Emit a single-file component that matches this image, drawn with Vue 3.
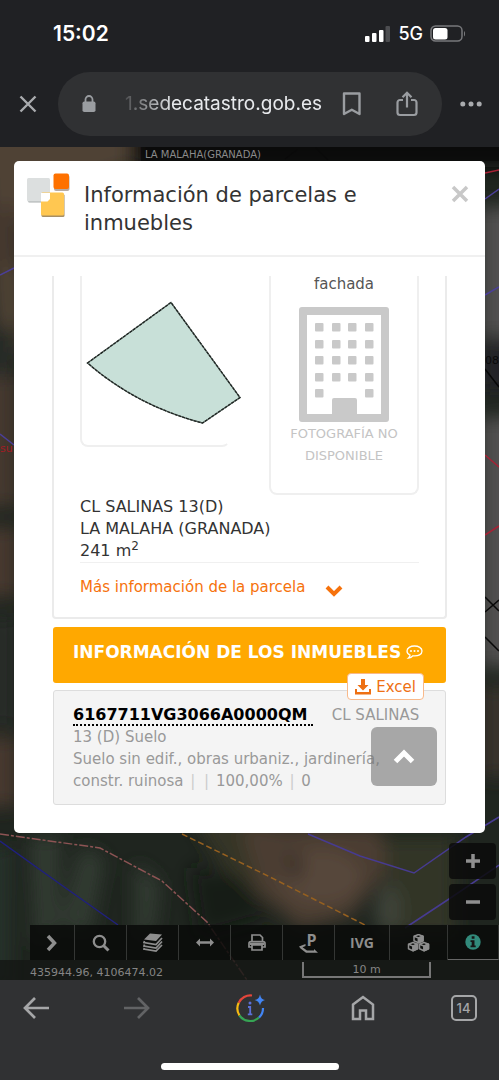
<template>
  <div class="screen">
    <header class="chrome">
      <div class="status">
        <time>15:02</time>
        <div class="signal">
          <svg width="26" height="18" viewBox="0 0 26 18" aria-hidden="true">
            <rect x="0" y="11" width="4.5" height="6" rx="1" fill="#fff" />
            <rect x="7" y="8" width="4.5" height="9" rx="1" fill="#fff" />
            <rect x="14" y="5" width="4.5" height="12" rx="1" fill="#fff" />
            <rect x="20.500" y="1" width="4.500" height="16" rx="1" fill="#4c4d50" />
          </svg>
          <span>5G</span>
          <svg width="36" height="18" viewBox="0 0 36 18" aria-hidden="true">
            <rect x="1" y="1" width="31" height="15" rx="4.500" fill="none" stroke="#77787b" stroke-width="1.500" />
            <rect x="3" y="3" width="14.500" height="11.500" rx="2.500" fill="#fff" />
            <path d="M34 6v5.500c1.400-.8 1.400-4.700 0-5.500z" fill="#77787b" />
          </svg>
        </div>
      </div>
      <div class="address">
        <button type="button" class="plain" aria-label="Cerrar">
          <svg width="18" height="18" viewBox="0 0 18 18"><path d="M1.500 1.500l15 15M16.500 1.500l-15 15" stroke="#a9abae" stroke-width="2.400" fill="none" /></svg>
        </button>
        <div class="omnibox">
          <svg width="14" height="18" viewBox="0 0 14 18" aria-hidden="true">
            <rect x="0.500" y="6.500" width="13" height="10.500" rx="1.800" fill="#9a9da1" />
            <path d="M3.500 7V4.500a3.500 3.500 0 0 1 7 0V7" fill="none" stroke="#9a9da1" stroke-width="1.800" />
          </svg>
          <button type="button" class="url">1.sedecatastro.gob.es</button>
          <button type="button" class="plain" aria-label="Guardar">
            <svg width="20" height="24" viewBox="0 0 20 24"><path d="M2 1.500h15.500v20.500l-7.700-4.200L2 22z" fill="none" stroke="#9a9da1" stroke-width="2.400" stroke-linejoin="round" /></svg>
          </button>
          <button type="button" class="plain" aria-label="Compartir">
            <svg width="22" height="26" viewBox="0 0 22 26"><path d="M7 9H4a2.500 2.500 0 0 0-2.500 2.500v10A2.500 2.500 0 0 0 4 24h14a2.500 2.500 0 0 0 2.500-2.500v-10A2.500 2.500 0 0 0 18 9h-3M11 16.500V2M6.500 6.200L11 1.800l4.500 4.400" fill="none" stroke="#9a9da1" stroke-width="2.200" /></svg>
          </button>
        </div>
        <button type="button" class="plain" aria-label="Más opciones">
          <svg width="22" height="6" viewBox="0 0 22 6" fill="#a9abae"><circle cx="2.800" cy="3" r="2.500" /><circle cx="11" cy="3" r="2.500" /><circle cx="19.200" cy="3" r="2.500" /></svg>
        </button>
      </div>
    </header>

    <main class="map">
      <svg class="terrain" viewBox="0 0 499 833" preserveAspectRatio="xMidYMax slice" aria-hidden="true">
        <defs>
          <filter id="soft" x="-20%" y="-20%" width="140%" height="140%"><feGaussianBlur stdDeviation="9" /></filter>
        </defs>
        <rect width="499" height="833" fill="#1f251f" />
        <g filter="url(#soft)">
          <path d="M-20-20h150v40l-60 20-50 40 6 120-26 30z" fill="#4f4235" />
          <path d="M-20 60h40v60h-40zM-20 230h38v130h-38z" fill="#44382d" />
          <path d="M-20 180h38v50h-38zM-20 470h38v110h-38z" fill="#252c26" />
          <path d="M-20 380h38v70h-38zM-20 590h38v70h-38z" fill="#46392d" />
          <path d="M130-20h400v40h-400z" fill="#0e0c0b" />
          <path d="M480 60h40v130h-40zM480 270h40v250h-40z" fill="#514f4f" />
          <path d="M480 195h40v50h-40z" fill="#202326" />
          <path d="M480 540h40v90h-40z" fill="#37332b" />
          <path d="M190 670h80l20 60 0 40-60-40z" fill="#343428" />
          <path d="M240 680h140l10 40-40 50-50 12-40-36z" fill="#4b3d30" />
          <ellipse cx="320" cy="730" rx="42" ry="28" fill="#57463a" />
          <ellipse cx="294" cy="720" rx="9" ry="13" fill="#392d25" />
          <path d="M385 690h70v100h-70z" fill="#303526" />
          <ellipse cx="388" cy="763" rx="12" ry="26" fill="#40443a" />
          <path d="M30 690l30 0 0 90-25 20zM80 700l25 10-15 80-30-10zM135 715l25 20-5 50-20 8z" fill="#303a31" />
          <path d="M190 720l50 10 30 40-70 20z" fill="#161a17" />
          <path d="M-20 700h30v140h-30z" fill="#26332a" />
        </g>
        <g fill="none" stroke-width="1.500">
          <path d="M0 687l100 14 62 33 45 41 40 58" stroke="#8d5454" stroke-dasharray="9 2 3 2" />
          <path d="M0 694l60 43 58 41" stroke="#20207e" />
          <path d="M182 687l88 43 95 48" stroke="#966020" stroke-dasharray="6 3" />
          <path d="M308 687l52 22 54 17 52-36 33-20M405 781l44-29 50-34" stroke="#473b91" />
          <path d="M0 128l14-7M0 287l14 11M485 52l14-10M485 148l14-8" stroke="#4b3f98" />
          <path d="M485 26l14-3M485 308l14 12M485 388l14-9" stroke="#a52235" />
          <path d="M285 12l13-10M315 0l13 13M485 222l14 18M485 450l14 14M485 465l14-12M485 490l14 14" stroke="#080808" />
        </g>
        <text x="0" y="305" fill="#a11c24" font-size="11">su</text>
        <text x="485" y="217" fill="#0a0a0a" font-size="11">08</text>
      </svg>
      <p class="place">LA MALAHA(GRANADA)</p>

      <section class="dialog" role="dialog" aria-labelledby="dialog-title">
        <header class="dialog-header">
          <svg width="44" height="46" viewBox="0 0 44 46" aria-hidden="true">
            <rect x="1" y="6.500" width="22" height="23" rx="1.500" fill="#a9adad" />
            <rect x="0" y="5" width="23" height="23.500" rx="1.500" fill="#dcdfdf" />
            <rect x="27" y="2" width="15.500" height="16" rx="2" fill="#b6aba3" />
            <rect x="26.500" y="0.500" width="15.500" height="15.500" rx="2" fill="#fe7100" />
            <rect x="14.500" y="21" width="23" height="23" rx="1.500" fill="#a78f65" />
            <rect x="14" y="19.500" width="23" height="23" rx="1.500" fill="#ffc751" />
            <path d="M14 20h9v6l-2.500 2.500H14z" fill="#fff" />
          </svg>
          <h1 id="dialog-title">Información de parcelas e inmuebles</h1>
          <button type="button" class="plain" aria-label="Cerrar">
            <svg width="18" height="18" viewBox="0 0 18 18"><path d="M2 2l14 14M16 2L2 16" stroke="#c8c8c8" stroke-width="3.500" /></svg>
          </button>
        </header>

        <div class="dialog-body">
          <article class="parcel">
            <div class="pictures">
              <figure class="plot">
                <svg width="162" height="126" viewBox="0 0 162 126" aria-label="Parcela">
                  <path d="M5.500 64L89 3.500 158 98.500 120.500 124Q55 107 5.500 64z" fill="#c8e0d8" stroke="#5f6f69" stroke-width="1.300" />
                  <path d="M5.500 64L89 3.500 158 98.500 120.500 124Q55 107 5.500 64z" fill="none" stroke="#1f2422" stroke-width="1.300" stroke-dasharray="3 1" />
                </svg>
              </figure>
              <figure class="facade">
                <figcaption>fachada</figcaption>
                <svg width="90" height="116" viewBox="0 0 90 116" aria-hidden="true">
                  <rect width="90" height="115" rx="3" fill="#c9c9c9" />
                  <path d="M8 8h74v99H58V93a2 2 0 0 0-2-2H35a2 2 0 0 0-2 2v14H8z" fill="#fff" />
                  <rect v-for="w in windows" :key="w.x + '-' + w.y" :x="w.x" :y="w.y" width="8.500" height="8.500" rx="1" fill="#c9c9c9" />
                </svg>
                <p>FOTOGRAFÍA NO DISPONIBLE</p>
              </figure>
            </div>
            <p class="location">CL SALINAS 13(D)<br />LA MALAHA (GRANADA)<br />241 m<sup>2</sup></p>
            <a href="#" class="more">
              Más información de la parcela
              <svg width="18" height="12" viewBox="0 0 18 12" aria-hidden="true"><path d="M2 2l7 7 7-7" fill="none" stroke="#f6720c" stroke-width="4" /></svg>
            </a>
          </article>

          <div class="banner">
            <h2>INFORMACIÓN DE LOS INMUEBLES</h2>
            <svg width="17" height="14" viewBox="0 0 17 14" aria-hidden="true">
              <path d="M8.500 1C4.500 1 1 3 1 6c0 1.700 1.200 3.200 3 4 0 1.300-.6 2.200-1.500 3 1.800-.2 3.300-1 4.300-2.200C12.500 11.400 16 9.300 16 6c0-3-3.500-5-7.500-5z" fill="none" stroke="#fff" stroke-width="1.300" />
              <circle cx="5" cy="6" r="1" fill="#fff" /><circle cx="8.500" cy="6" r="1" fill="#fff" /><circle cx="12" cy="6" r="1" fill="#fff" />
            </svg>
            <button type="button" class="excel">
              <svg width="16" height="16" viewBox="0 0 16 16" fill="#ee7013" aria-hidden="true"><path d="M6 0h4v6h3.500L8 11.500 2.500 6H6z" /><path d="M0 10h2v3h12v-3h2v5.500H0z" /></svg>
              Excel
            </button>
          </div>

          <article class="property">
            <p><a href="#">6167711VG3066A0000QM&nbsp;</a> CL SALINAS 13 (D) Suelo</p>
            <p>Suelo sin edif., obras urbaniz., jardinería, constr. ruinosa <i>|</i> <i>|</i> 100,00% <i>|</i> 0</p>
          </article>
        </div>

        <button type="button" class="to-top" aria-label="Subir">
          <svg width="22" height="16" viewBox="0 0 22 16"><path d="M2.500 12.500l8.500-8.500 8.500 8.500" fill="none" stroke="#fff" stroke-width="5" /></svg>
        </button>
      </section>

      <div class="zoom">
        <button type="button" aria-label="Acercar"><svg width="14" height="14" viewBox="0 0 14 14"><path d="M7 0v14M0 7h14" stroke="#8f8f8f" stroke-width="3.500" /></svg></button>
        <button type="button" aria-label="Alejar"><svg width="14" height="14" viewBox="0 0 14 14"><path d="M0 7h14" stroke="#8f8f8f" stroke-width="3.500" /></svg></button>
      </div>

      <nav class="tools">
        <button type="button" aria-label="Mostrar"><svg width="12" height="18" viewBox="0 0 12 18"><path d="M2 2l6.500 7L2 16" fill="none" stroke="currentColor" stroke-width="3.500" /></svg></button>
        <button type="button" aria-label="Buscar"><svg width="18" height="18" viewBox="0 0 18 18"><circle cx="7.500" cy="7.500" r="5.700" fill="none" stroke="currentColor" stroke-width="2.300" /><path d="M11.500 11.500l5 5" stroke="currentColor" stroke-width="3" /></svg></button>
        <button type="button" aria-label="Capas">
          <svg width="20" height="19" viewBox="0 0 20 19"><path d="M7 0.500L19 1.500 13 8 1 6.500z" fill="currentColor" /><path d="M1.500 8l-.5 1.500L13 11.500 19 5M1.500 11.500L1 13l12 2 6-6.500M1.500 15l-.5 1 12 2 6-6" fill="none" stroke="currentColor" stroke-width="1.700" /></svg>
        </button>
        <button type="button" aria-label="Medir"><svg width="18" height="9" viewBox="0 0 18 9"><path d="M0 4.500L4 .5v2.800h10V.5l4 4-4 4V5.700H4v2.800z" fill="currentColor" /></svg></button>
        <button type="button" aria-label="Imprimir">
          <svg width="18" height="17" viewBox="0 0 18 17" fill="none" stroke="currentColor" stroke-width="1.700"><path d="M4 8V1h8l2.500 2.500V8M4 13H1V9.500Q1 7.500 3 7.500h12q2 0 2 2V13h-3" /><path d="M4 11h10v5H4z" /><path d="M2 8.500h14V11H2z" fill="currentColor" stroke="none" /></svg>
        </button>
        <button type="button" class="street-p" aria-label="Vista P"><b>P</b><svg width="19" height="9" viewBox="0 0 19 9"><path d="M0 2.500L6.500 0v2l-3 1.200L8 6.500h7V5l4 3.800H7L1.500 4.500z" fill="currentColor" /></svg></button>
        <button type="button"><b>IVG</b></button>
        <button type="button" aria-label="Volúmenes">
          <svg width="23" height="18" viewBox="0 0 23 18" fill="none" stroke="currentColor" stroke-width="1.500" stroke-linejoin="round">
            <g v-for="c in cubes" :key="c" :transform="c"><path d="M5 .5l4.500 1.700v4.600L5 8.800.5 6.800V2.200z" /><path d="M.5 2.200L5 4l4.500-1.800M5 4v4.800" /><path d="M5 4l4.500-1.800v4.600L5 8.800z" fill="currentColor" /></g>
          </svg>
        </button>
        <button type="button" aria-label="Información">
          <svg width="16" height="16" viewBox="0 0 16 16"><circle cx="8" cy="8" r="7.700" fill="#328a7b" /><path d="M6.700 2.300h2.800v2.400H6.700zM5.500 6.200h4v5.300h1.200v1.800H5.500v-1.800h1.200V8H5.500z" fill="#161616" /></svg>
        </button>
      </nav>
      <div class="readout">
        <span>435944.96, 4106474.02</span>
        <span class="scale">10 m</span>
      </div>
    </main>

    <footer class="bottom">
      <nav>
        <button type="button" class="plain" aria-label="Atrás"><svg width="28" height="24" viewBox="0 0 28 24"><path d="M27 12H3M13 2L3 12l10 10" fill="none" stroke="#a5a6a8" stroke-width="2.700" /></svg></button>
        <button type="button" class="plain" aria-label="Adelante"><svg width="28" height="24" viewBox="0 0 28 24"><path d="M1 12h24M15 2l10 10-10 10" fill="none" stroke="#626365" stroke-width="2.700" /></svg></button>
        <button type="button" class="plain" aria-label="Info">
          <svg width="30" height="30" viewBox="0 0 30 30" fill="none" stroke-width="2.200">
            <path d="M3.700 9.800A13 13 0 0 1 17 2.500" stroke="#e4463b" />
            <path d="M3.700 9.800A13 13 0 0 0 4.500 22.500" stroke="#f6bb12" />
            <path d="M4.500 22.500A13 13 0 0 0 24 24.500" stroke="#36a454" />
            <path d="M24 24.500A13 13 0 0 0 28 15" stroke="#4285f4" />
            <path d="M25 1.500q1 5 5 5.500-4 .8-5 5.500-1-4.700-5.500-5.500Q24 6.500 25 1.500z" fill="#4285f4" />
            <circle cx="15" cy="10" r="1.500" fill="#5b70d8" /><path d="M13 14h2.200v7.500M12.800 21.300h4.500" stroke="#5b70d8" stroke-width="1.800" />
          </svg>
        </button>
        <button type="button" class="plain" aria-label="Inicio"><svg width="24" height="26" viewBox="0 0 24 26"><path d="M2 9.500L12 2l10 7.500v14.500h-7V15.500H9V24H2z" fill="none" stroke="#a5a6a8" stroke-width="2.500" /></svg></button>
        <button type="button" class="tabs">14</button>
      </nav>
      <div class="home-bar"></div>
    </footer>
  </div>
</template>

<script setup>
const columns = [16, 33, 49, 66]
const rows = [16, 33, 49, 66, 82]

// the door takes the place of the two middle windows on the ground floor
const windows = rows.flatMap((y) =>
  columns.filter((x) => y !== 82 || x === 16 || x === 66).map((x) => ({ x, y }))
)

const cubes = ['translate(6.500 0)', 'translate(1 8)', 'translate(12 8)']
</script>

<style>
body {
  margin: 0;
  background: #303133;
}
</style>

<style scoped>
.screen {
  min-height: 100vh;
  display: flex;
  flex-direction: column;
  font-family: Verdana, 'DejaVu Sans', sans-serif;
  font-size: 15px;
  line-height: 22px;
  color: #333;
}

button {
  font: inherit;
  border: none;
  padding: 0;
  cursor: pointer;
}

svg {
  display: block;
  flex: none;
}

h1,
h2,
p,
figure {
  margin: 0;
  font-weight: normal;
}

.plain {
  display: flex;
  background: none;
}

.chrome {
  background: #202124;
  color: #fff;
  font-family: Inter, Roboto, sans-serif;
  padding-bottom: 11px;
}

.status {
  display: flex;
  justify-content: space-between;
  align-items: center;
  height: 68px;
  padding: 0 33px 0 53px;
  font-size: 21px;
  font-weight: 600;
}

.signal {
  display: flex;
  align-items: center;
  gap: 7px;
  font-size: 18px;
  font-weight: 500;
}

.address {
  display: flex;
  align-items: center;
  gap: 18px;
  padding: 4px 17px 0 19px;
}

.address > .plain:first-child {
  margin-right: 3px;
}

.omnibox {
  flex: 1;
  display: flex;
  align-items: center;
  gap: 20px;
  height: 64px;
  padding: 0 24px;
  border-radius: 32px;
  background: #303133;
}

.omnibox .plain + .plain {
  margin-left: 14px;
}

.url {
  flex: 1;
  min-width: 0;
  overflow: hidden;
  display: flex;
  justify-content: flex-end;
  background: none;
  color: #e8eaed;
  font-size: 19px;
  line-height: 28px;
  white-space: nowrap;
  mask-image: linear-gradient(to right, transparent, #000 28%);
}

.map {
  position: relative;
  flex: 1;
  display: flex;
  flex-direction: column;
  overflow: hidden;
  background: #1b1f1b;
}

.terrain {
  position: absolute;
  inset: 0;
  width: 100%;
  height: 100%;
}

.place {
  position: relative;
  height: 14px;
  margin-left: 141px;
  padding-left: 4px;
  background: rgba(10, 10, 10, 0.7);
  color: #8a8a8a;
  font-size: 10px;
  line-height: 16px;
}

.dialog {
  position: relative;
  margin: 0 14px;
  border-radius: 5px;
  background: #fff;
}

.dialog-header {
  display: flex;
  align-items: flex-start;
  padding: 12px 16px 18px 13px;
  border-bottom: 2px solid #f0f0f0;
}

.dialog-header h1 {
  flex: 1;
  margin: 8px 0 0 13px;
  font-size: 21px;
  line-height: 28px;
}

.dialog-header .plain {
  margin-top: 12px;
}

.dialog-body {
  padding: 19px 38px 28px;
}

.parcel {
  padding: 0 26px 19px;
  border: 2px solid #ebebeb;
  border-top: none;
  border-radius: 0 0 4px 4px;
}

.pictures {
  display: flex;
  justify-content: space-between;
  align-items: flex-start;
}

.plot,
.facade {
  box-sizing: border-box;
  width: 150px;
  border: 2px solid #efefef;
  border-top: none;
  border-radius: 0 0 8px 8px;
}

.plot {
  height: 171px;
  padding-top: 23px;
  border-right-color: transparent;
}

.facade {
  display: flex;
  flex-direction: column;
  align-items: center;
  height: 219px;
  color: #555;
  line-height: 16px;
  text-align: center;
}

.facade svg {
  margin-top: 15px;
}

.facade p {
  color: #c4c4c4;
  font-size: 13px;
  line-height: 22px;
}

.location {
  margin-top: 1px;
  border-bottom: 1px solid #f0f0f0;
  font-size: 16px;
}

sup {
  font-size: 12px;
  line-height: 0;
}

.more {
  display: flex;
  align-items: center;
  gap: 20px;
  padding-top: 13px;
  color: #f6720c;
  text-decoration: none;
}

.more svg {
  margin-top: 7px;
}

.banner {
  position: relative;
  display: flex;
  align-items: center;
  gap: 5px;
  height: 50px;
  margin: 8px 1px 7px;
  padding: 0 20px 6px;
  border-radius: 3px;
  background: #ffa800;
  color: #fff;
}

.banner h2 {
  font-size: 17px;
  font-weight: bold;
  white-space: nowrap;
}

.excel {
  position: absolute;
  right: 22px;
  bottom: -17px;
  display: flex;
  align-items: center;
  gap: 5px;
  height: 27px;
  padding: 0 7px;
  border: 1px solid #f9b98a;
  border-radius: 4px;
  background: #fff;
  color: #ee7013;
}

.property {
  margin: 0 1px;
  padding: 13px 19px 12px;
  border: 1px solid #ddd;
  border-radius: 3px;
  background: #f4f4f4;
  color: #999;
}

.property a {
  margin-right: 14px;
  border-bottom: 2px dotted #000;
  color: #000;
  font-size: 16px;
  font-weight: bold;
  line-height: 20px;
  text-decoration: none;
}

.property i {
  margin: 0 2px;
  color: #ccc;
  font-style: normal;
}

.to-top {
  position: absolute;
  right: 48px;
  bottom: 47px;
  display: grid;
  place-items: center;
  width: 66px;
  height: 59px;
  border-radius: 6px;
  background: rgba(120, 120, 120, 0.62);
}

.zoom {
  position: relative;
  display: flex;
  flex-direction: column;
  align-items: flex-end;
  gap: 5px;
  padding: 10px 3px 5px;
  margin-top: auto;
}

.zoom button {
  display: grid;
  place-items: center;
  width: 47px;
  height: 36px;
  border-radius: 4px;
  background: rgba(10, 11, 10, 0.85);
}

.tools {
  position: relative;
  display: grid;
  grid-template-columns: 45px repeat(5, 1fr) 55px 58px 51px;
  height: 35px;
  margin-left: 30px;
}

.tools button {
  display: grid;
  place-items: center;
  border-right: 1px solid #343634;
  background: rgba(9, 11, 9, 0.86);
  color: #8e8e8e;
}

.tools button:last-child {
  border-bottom: 1px solid #666;
}

.tools b {
  font-family: 'Open Sans', sans-serif;
  font-size: 14px;
  line-height: 16px;
}

.tools .street-p {
  align-content: center;
  line-height: 12px;
}

.tools .street-p b {
  margin-bottom: -4px;
  padding-left: 6px;
  font-size: 16px;
}

.readout {
  position: relative;
  display: flex;
  justify-content: space-between;
  height: 20px;
  padding: 0 68px 0 30px;
  background: rgba(20, 22, 20, 0.8);
  color: #858585;
  font-size: 11px;
  line-height: 26px;
}

.scale {
  box-sizing: border-box;
  width: 129px;
  height: 16px;
  margin-top: 2px;
  border: 2px solid #777;
  border-top: none;
  line-height: 16px;
  text-align: center;
}

.bottom {
  padding: 10px 0;
  background: #303133;
}

.bottom nav {
  display: grid;
  grid-template-columns: 72fr 130fr 96fr 130fr 71fr;
  place-items: center;
  height: 36px;
}

.tabs {
  width: 26px;
  height: 26px;
  border: 2px solid #a5a6a8;
  border-radius: 5px;
  background: none;
  color: #a5a6a8;
  font-family: Inter, sans-serif;
  font-size: 13px;
  font-weight: 500;
  line-height: 22px;
}

.home-bar {
  width: 178px;
  height: 7px;
  margin: 37px auto 0;
  border-radius: 4px;
  background: #fff;
}
</style>
